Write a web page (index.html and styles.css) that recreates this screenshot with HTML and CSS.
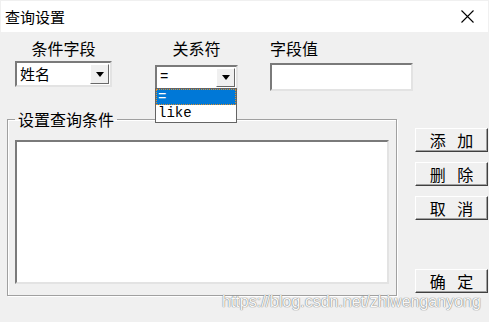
FILE: index.html
```html
<!DOCTYPE html>
<html lang="zh-CN">
<head>
    <meta charset="UTF-8">
    <meta name="viewport" content="width=device-width, initial-scale=1.0">
    <title>查询设置</title>
    <link rel="stylesheet" href="styles.css">
</head>
<body>
    <div class="window">
        <div class="titlebar">
            <span class="title">查询设置</span>
            <svg class="close" width="13" height="13" viewBox="0 0 13 13">
                <path d="M0.5 0.5 L12.5 12.5 M12.5 0.5 L0.5 12.5" stroke="#000" stroke-width="1.1" fill="none"/>
            </svg>
        </div>

        <div class="content">
            <div class="fields">
                <div class="field field-name">
                    <div class="label">条件字段</div>
                    <div class="combo combo-name">
                        <span class="combo-text">姓名</span>
                        <span class="combo-btn"><i class="arrow"></i></span>
                    </div>
                </div>
                <div class="field field-op">
                    <div class="label">关系符</div>
                    <div class="combo combo-op">
                        <span class="combo-text mono">=</span>
                        <span class="combo-btn"><i class="arrow"></i></span>
                        <ul class="dropdown">
                            <li class="selected">=</li>
                            <li>like</li>
                        </ul>
                    </div>
                </div>
                <div class="field field-value">
                    <div class="label">字段值</div>
                    <div class="textbox"></div>
                </div>
            </div>

            <div class="main">
                <fieldset class="group">
                    <legend>设置查询条件</legend>
                    <div class="list"></div>
                </fieldset>
                <div class="buttons">
                    <button class="btn">添 加</button>
                    <button class="btn">删 除</button>
                    <button class="btn">取 消</button>
                    <button class="btn btn-ok">确 定</button>
                </div>
            </div>

            <div class="watermark">https://blog.csdn.net/zhiwenganyong</div>
        </div>
    </div>
</body>
</html>
```

FILE: styles.css
```css
body {
    margin: 0;
    background-color: #f0f0f0;
    font-family: "Noto Sans CJK SC", "Noto Sans", sans-serif;
    color: #000;
}

.window {
    width: 489px;
    height: 322px;
    position: relative;
    overflow: hidden;
    background-color: #f0f0f0;
}

/* title bar */
.titlebar {
    margin: 1px 1px 0 1px;
    height: 31px;
    background-color: #fff;
    display: flex;
    align-items: center;
    justify-content: space-between;
    padding: 0 14px 0 4px;
}

.title {
    font-size: 15px;
    line-height: 18px;
}

/* top row of fields */
.fields {
    display: flex;
    padding: 7px 0 0 15px;
}

.field {
    display: flex;
    flex-direction: column;
}

.label {
    font-size: 16px;
    line-height: 18px;
    height: 18px;
}

.field-name {
    width: 97px;
    align-items: center;
}

.field-op {
    width: 83px;
    margin-left: 43px;
    align-items: center;
}

.field-value {
    width: 143px;
    margin-left: 32px;
}

.combo {
    box-sizing: border-box;
    width: 100%;
    background-color: #fff;
    border: 2px solid;
    border-color: #7a7a7a #e3e3e3 #e3e3e3 #7a7a7a;
    display: flex;
    align-items: stretch;
    position: relative;
}

.combo-name {
    margin-top: 4px;
    height: 26px;
}

.combo-op {
    margin-top: 8px;
    height: 25px;
}

.combo-text {
    flex: 1;
    padding-left: 3px;
    font-size: 15px;
    line-height: 21px;
}

.mono {
    font-family: "Liberation Mono", monospace;
    font-size: 14px;
}

.combo-btn {
    width: 19px;
    margin: 1px;
    box-sizing: border-box;
    background-color: #f0f0f0;
    border: 1px solid;
    border-color: #fff #696969 #696969 #fff;
    display: flex;
    align-items: center;
    justify-content: center;
}

.arrow {
    width: 0;
    height: 0;
    border-left: 4px solid transparent;
    border-right: 4px solid transparent;
    border-top: 5px solid #000;
}

.dropdown {
    position: absolute;
    top: 100%;
    left: -2px;
    width: 82px;
    box-sizing: border-box;
    margin: 0;
    padding: 0;
    list-style: none;
    background-color: #fff;
    border: 1px solid #646464;
    font-family: "Liberation Mono", monospace;
    font-size: 14px;
}

.dropdown li {
    height: 17px;
    line-height: 17px;
    padding-left: 2px;
}

.dropdown li.selected {
    height: 16px;
    line-height: 16px;
    background-color: #0078d7;
    color: #fff;
    outline: 1px dotted #e0902a;
    outline-offset: -1px;
}

.textbox {
    margin-top: 6px;
    height: 28px;
    box-sizing: border-box;
    background-color: #fff;
    border: 2px solid;
    border-color: #7a7a7a #e3e3e3 #e3e3e3 #7a7a7a;
}

/* group box and buttons */
.main {
    display: flex;
    margin-top: 19px;
    padding-left: 7px;
}

.group {
    width: 390px;
    box-sizing: border-box;
    margin: 0;
    padding: 0 7px 11px 7px;
    border: 1px solid #a0a0a0;
    box-shadow: inset 1px 1px #fff, 1px 1px #fff;
}

.group legend {
    font-size: 16px;
    line-height: 18px;
    padding: 0 3px;
    margin-left: 0;
}

.list {
    margin-top: 12px;
    height: 144px;
    box-sizing: border-box;
    background-color: #fff;
    border: 2px solid;
    border-color: #7a7a7a #e3e3e3 #e3e3e3 #7a7a7a;
}

.buttons {
    display: flex;
    flex-direction: column;
    gap: 10px;
    margin-left: 18px;
    padding-top: 18px;
    width: 73px;
    height: 183px;
    box-sizing: border-box;
}

.btn {
    height: 24px;
    padding: 0;
    background-color: #f0f0f0;
    border: 1px solid;
    border-color: #fff #404040 #404040 #fff;
    box-shadow: inset -1px -1px #a0a0a0;
    font-family: "Noto Sans CJK SC", sans-serif;
    font-size: 16px;
    line-height: 20px;
    letter-spacing: 4px;
    text-indent: 4px;
    color: #000;
}

.btn-ok {
    margin-top: auto;
}

.watermark {
    position: absolute;
    left: 222px;
    top: 294px;
    font-family: "Liberation Sans", Arial, sans-serif;
    font-size: 16px;
    line-height: 16px;
    color: #f8f8f8;
    text-shadow: 0 0 1px #6e6e6e, 0 0 1px #8a8a8a;
}
```
